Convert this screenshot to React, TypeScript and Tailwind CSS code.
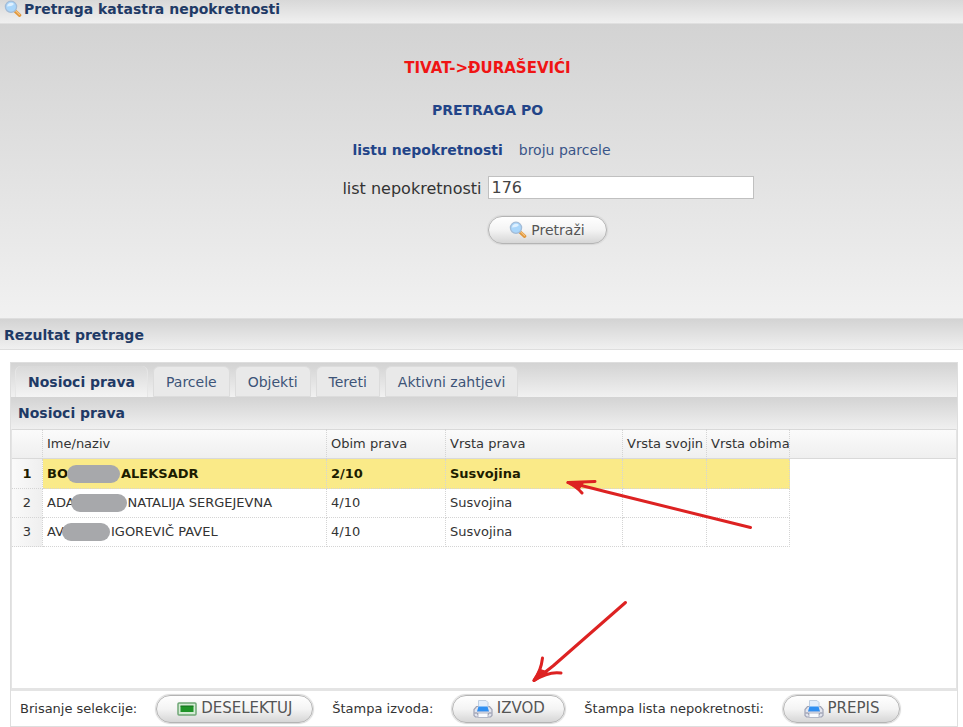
import { useState, type ReactNode } from 'react';

const SearchIcon = () => (
  <svg viewBox="0 0 18 18" className="size-[18px] shrink-0" aria-hidden="true">
    <path d="M11 11l4.600 4.200" stroke="#e0963a" strokeWidth="3.400" strokeLinecap="round" />
    <path d="M11.500 10.600l4.100 4" stroke="#f6c583" strokeWidth="1.200" strokeLinecap="round" />
    <circle cx="7" cy="6.800" r="5.600" fill="#a9d6fb" stroke="#a3bbd6" strokeWidth="1.300" />
    <path d="M3 6.500a4 4 0 0 1 7-2.400c-1.400 2.200-4.200 2.400-7 2.400z" fill="#def0ff" />
  </svg>
);

const PrinterIcon = () => (
  <svg viewBox="0 0 20 20" className="size-5 shrink-0" aria-hidden="true">
    <path d="M3.500 7.500h13l2.500 3v6l-1.500 1.500h-15L1 16.500v-6z" fill="#e3e5ee" stroke="#a0a4b6" strokeWidth="1.200" />
    <path d="M5.500 9V1.500h7.500l2 2V9z" fill="#e4eefb" stroke="#c0cee0" strokeWidth="1" />
    <path d="M5.500 7.500h9l1.500 5H4z" fill="#2f8ff2" />
    <path d="M4 12.500h12" stroke="#8fb4e4" strokeWidth="1" />
    <path d="M1.500 14h3v1.500h11V14h3" fill="none" stroke="#85899c" strokeWidth="1" />
    <path d="M5 14h10v4.500H5z" fill="#fafbfd" stroke="#b4b8c6" strokeWidth="1" />
  </svg>
);

const DeselectIcon = () => (
  <svg viewBox="0 0 20 14" className="h-3.5 w-5 shrink-0" aria-hidden="true">
    <rect x="1" y="1" width="18" height="12" rx="1" fill="#d5ecd5" stroke="#6fa676" strokeWidth="1.500" />
    <rect x="3.500" y="4" width="13" height="6" fill="#1f9428" />
    <path d="M3.500 4h13" stroke="#126a1b" />
  </svg>
);

const PillButton = ({ children, className }: { children: ReactNode; className: string }) => (
  <button
    type="button"
    className={`flex h-7 items-center justify-center rounded-full border border-[#b4b4b4] bg-linear-to-b from-white via-[#f4f4f4] to-[#d6d6d6] text-[#555] shadow-[0_0_1px_1px_#d8d8d8] ${className}`}
  >
    {children}
  </button>
);

const BAR = 'bg-linear-to-b from-[#d3d3d3] to-[#f0f0f0] text-sm font-bold text-[#1f3a66]';

const tabs = ['Nosioci prava', 'Parcele', 'Objekti', 'Tereti', 'Aktivni zahtjevi'];

const rows = [
  { start: 'BO', end: 'ALEKSADR', mask: '-ml-px w-[53px]', share: '2/10' },
  { start: 'ADA', end: 'NATALIJA SERGEJEVNA', mask: '-ml-1 w-14', share: '4/10' },
  { start: 'AV', end: 'IGOREVIČ PAVEL', mask: '-ml-0.5 w-12', share: '4/10' },
];

const CELL = 'overflow-hidden border-r border-b border-dotted border-[#d4d4d4] pl-1 text-left whitespace-nowrap';
const HEAD = 'overflow-hidden border-r border-dotted border-[#d4d4d4] pl-1 text-left font-normal whitespace-nowrap';

const Arrows = () => (
  <svg
    className="pointer-events-none absolute top-0 left-0 h-[727px] w-[963px]"
    viewBox="0 0 963 727"
    fill="none"
    stroke="#dd2222"
    strokeWidth="3"
    strokeLinecap="round"
    strokeLinejoin="round"
    aria-hidden="true"
  >
    <path d="M750.500 527.500L605 491.500Q584 486 568 482.500M595 481.500Q580 482 568 482.500Q577 487 582 493" />
    <path d="M568 482.500l14 1-3 4z" fill="#dd2222" />
    <path d="M625.500 602.500L553 666Q543 674 534 680.500M542.500 658Q541 671 534 680.500Q549 671 561 673" />
    <path d="M534 680.500l6-10 6 2z" fill="#dd2222" />
  </svg>
);

export default function App() {
  const [query, setQuery] = useState('176');
  const [active, setActive] = useState(0);

  return (
    <div className="relative overflow-hidden bg-white font-['DejaVu_Sans',Verdana,sans-serif] text-[13px] text-[#333]">
      <header className="flex h-6 items-start gap-0.5 border-b border-[#e0e0e0] bg-linear-to-b from-[#d8d8d8] to-[#f0f0f0] pl-1">
        <SearchIcon />
        <h1 className="text-sm leading-[18px] font-bold text-[#1f3a66]">Pretraga katastra nepokretnosti</h1>
      </header>

      <form
        className="h-[294px] bg-linear-to-b from-[#d3d3d3] to-[#f1f1f1] pt-[34px]"
        onSubmit={(e) => e.preventDefault()}
      >
        <div className="pl-3 text-center font-bold">
          <p className="text-[15px] leading-5 text-[#f01414]">TIVAT-&gt;ĐURAŠEVIĆI</p>
          <h2 className="mt-[22px] text-sm text-[#224488]">PRETRAGA PO</h2>
        </div>
        <nav className="mt-5 flex justify-center gap-4 text-sm">
          <a href="#list" className="font-bold text-[#224488]">listu nepokretnosti</a>
          <a href="#parcela" className="text-[#3a5588]">broju parcele</a>
        </nav>
        <div className="mt-[15px] grid grid-cols-2 items-center gap-y-[17px]">
          <label htmlFor="list" className="pt-1 text-right text-base leading-5">
            list nepokretnosti
          </label>
          <input
            id="list"
            type="text"
            value={query}
            onChange={(e) => setQuery(e.target.value)}
            className="ml-1.5 h-[23px] w-[266px] border border-[#c0c0c0] bg-white px-[3px] text-base leading-5 text-[#444] outline-none"
          />
          <PillButton className="col-start-2 ml-1.5 w-[119px] gap-1 text-sm">
            <SearchIcon />
            Pretraži
          </PillButton>
        </div>
      </form>

      <h2 className={`h-8 border-y border-[#dedede] pl-1 leading-8 ${BAR}`}>Rezultat pretrage</h2>

      <main className="mt-3 mr-[5px] ml-2.5 border border-[#dedede]">
        <div role="tablist" className="flex h-[34px] items-end gap-[5px] bg-linear-to-b from-[#d3d3d3] to-[#f1f1f1] pl-1 text-sm">
          {tabs.map((name, i) => (
            <button
              key={name}
              type="button"
              role="tab"
              aria-selected={i === active}
              onClick={() => setActive(i)}
              className={
                i === active
                  ? 'h-[31px] rounded-t-md border-x border-[#e6e6e6] bg-linear-to-b from-[#d9d9d9] to-[#f4f4f4] px-3 font-bold text-[#1f3a66]'
                  : 'h-[31px] rounded-t-md border border-[#dcdcdc] bg-[#e9e9e9] px-3 text-[#3d5478]'
              }
            >
              {name}
            </button>
          ))}
        </div>
        <h3 className={`h-8 pl-[7px] leading-8 ${BAR}`}>Nosioci prava</h3>

        <section className="min-h-[262px] border-x border-b-[3px] border-[#e4e4e4]">
          <div className="h-[30px] border-y border-[#d9d9d9] bg-linear-to-b from-[#fbfbfb] to-[#efefef]" />
          <table className="-mt-[30px] w-[778px] table-fixed border-separate border-spacing-0">
            <colgroup>
              <col className="w-[31px]" />
              <col className="w-[284px]" />
              <col className="w-[119px]" />
              <col className="w-[177px]" />
              <col className="w-[84px]" />
              <col className="w-[83px]" />
            </colgroup>
            <thead>
              <tr className="h-[30px]">
                <th className={HEAD} aria-label="#" />
                <th className={HEAD}>Ime/naziv</th>
                <th className={HEAD}>Obim prava</th>
                <th className={HEAD}>Vrsta prava</th>
                <th className={HEAD}>Vrsta svojin</th>
                <th className={HEAD}>Vrsta obima</th>
              </tr>
            </thead>
            <tbody>
              {rows.map((row, i) => (
                <tr key={row.start} className={i === 0 ? 'h-[30px] bg-[#faea88] font-bold text-[#1c1c00]' : 'h-[29px] font-normal'}>
                  <th
                    className={`border-r border-b border-dotted border-[#d4d4d4] bg-linear-to-r from-[#fafafa] to-[#efefef] text-center ${i === 0 ? 'font-bold' : 'font-normal'}`}
                  >
                    {i + 1}
                  </th>
                  <td className={CELL}>
                    <span className="flex items-center">
                      {row.start}
                      <span className={`mr-px h-[18px] rounded-full bg-[#a7a8ab] ${row.mask}`} />
                      {row.end}
                    </span>
                  </td>
                  <td className={CELL}>{row.share}</td>
                  <td className={CELL}>Susvojina</td>
                  <td className={CELL} />
                  <td className={CELL} />
                </tr>
              ))}
            </tbody>
          </table>
        </section>

        <footer className="flex h-[35px] items-center gap-[19px] pl-[9px]">
          <span>Brisanje selekcije:</span>
          <PillButton className="w-[157px] gap-1 text-[15px]">
            <DeselectIcon />
            DESELEKTUJ
          </PillButton>
          <span>Štampa izvoda:</span>
          <PillButton className="w-[113px] gap-1 text-[15px]">
            <PrinterIcon />
            IZVOD
          </PillButton>
          <span>Štampa lista nepokretnosti:</span>
          <PillButton className="w-[117px] gap-1 text-[15px]">
            <PrinterIcon />
            PREPIS
          </PillButton>
        </footer>
      </main>

      <Arrows />
    </div>
  );
}
